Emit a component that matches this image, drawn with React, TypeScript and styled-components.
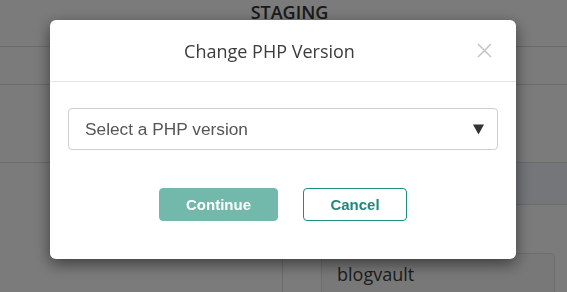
import styled, { createGlobalStyle } from 'styled-components';

const GlobalStyle = createGlobalStyle`
  html, body {
    margin: 0;
    padding: 0;
    background: #f6f6f6;
  }
  body {
    font-family: "Open Sans", "Liberation Sans", sans-serif;
    overflow: hidden;
  }
`;

/* page behind the dialog */

const Page = styled.div`
  width: 567px;
  height: 292px;
  background: #f6f6f6;
  overflow: hidden;
`;

const PanelTitle = styled.div`
  height: 46px;
  border-bottom: 1px solid #d6d6d6;
  padding-left: 12px;
  text-align: center;
  font-size: 18px;
  font-weight: 600;
  color: #333;
  text-transform: uppercase;
  line-height: normal;
`;

const Row = styled.div<{ $h: number; $noLine?: boolean }>`
  height: ${(p) => p.$h}px;
  display: grid;
  grid-template-columns: 283px 1fr;
  border-bottom: 1px solid ${(p) => (p.$noLine ? 'transparent' : '#d6d6d6')};
`;

const Cell = styled.div<{ $tint?: boolean; $line?: boolean }>`
  background: ${(p) => (p.$tint ? '#e9ecf3' : 'transparent')};
  border-bottom: ${(p) => (p.$line ? '1px solid #d6d6d6' : 'none')};
`;

const Bottom = styled.div`
  display: grid;
  grid-template-columns: 283px 1fr;
  height: 100px;
`;

const LeftCol = styled.div`
  border-right: 1px solid #d6d6d6;
`;

const RightCol = styled.div`
  padding: 47px 12px 0 38px;
`;

const NameInput = styled.div`
  height: 44px;
  border: 1px solid #dcdcdc;
  border-radius: 4px;
  background: #f0f0f0;
  padding: 8px 0 0 15px;
  font-size: 18px;
  color: #3a3a3a;
`;

/* dialog */

const Overlay = styled.div`
  position: fixed;
  inset: 0;
  background: rgba(0, 0, 0, 0.5);
  display: flex;
  justify-content: flex-start;
  align-items: flex-start;
  padding: 20px 0 0 50px;
`;

const Dialog = styled.div`
  width: 466px;
  height: 239px;
  background: #fff;
  border-radius: 6px;
  box-shadow: 0 5px 15px rgba(0, 0, 0, 0.5);
  display: flex;
  flex-direction: column;
`;

const Header = styled.div`
  height: 61px;
  border-bottom: 1px solid #e5e5e5;
  display: flex;
  align-items: center;
  padding: 0 24px 0 12px;
`;

const Title = styled.h4`
  flex: 1;
  margin: 0;
  text-align: center;
  font-family: "Open Sans", sans-serif;
  font-size: 18px;
  font-weight: 400;
  color: #3c3c3c;
`;

const CloseButton = styled.button`
  width: 15px;
  height: 15px;
  padding: 0;
  border: none;
  background: none;
  display: flex;
  cursor: pointer;
`;

const Body = styled.div`
  padding: 26px 18px 0;
`;

const Select = styled.div`
  height: 40px;
  border: 1px solid #cfcfcf;
  border-radius: 4px;
  display: flex;
  align-items: center;
  justify-content: space-between;
  padding: 0 13px 0 16px;
  font-family: "Liberation Sans", Arial, sans-serif;
  font-size: 17.3px;
  color: #555;
`;

const Actions = styled.div`
  display: flex;
  justify-content: center;
  gap: 25px;
  margin-top: 38px;
`;

const Button = styled.button<{ $primary?: boolean; $w: number }>`
  width: ${(p) => p.$w}px;
  height: 33px;
  border-radius: 4px;
  border: 1px solid ${(p) => (p.$primary ? '#72b9ac' : '#1b8e7e')};
  background: ${(p) => (p.$primary ? '#72b9ac' : '#fff')};
  color: ${(p) => (p.$primary ? '#fff' : '#1b8a7a')};
  font-family: "Liberation Sans", Arial, sans-serif;
  font-weight: 700;
  font-size: 15px;
  padding: 0;
  cursor: pointer;
`;

export default function App() {
  return (
    <>
      <GlobalStyle />
      <Page>
        <PanelTitle>Staging</PanelTitle>
        <Row $h={37} />
        <Row $h={77} />
        <Row $h={42} $noLine>
          <Cell />
          <Cell $tint $line />
        </Row>
        <Bottom>
          <LeftCol />
          <RightCol>
            <NameInput>blogvault</NameInput>
          </RightCol>
        </Bottom>
      </Page>
      <Overlay>
        <Dialog>
          <Header>
            <Title>Change PHP Version</Title>
            <CloseButton aria-label="Close">
              <svg width="15" height="15" viewBox="0 0 15 15">
                <path d="M1 1L14 14M14 1L1 14" stroke="#c6c6c6" strokeWidth="1.6" />
              </svg>
            </CloseButton>
          </Header>
          <Body>
            <Select>
              <span>Select a PHP version</span>
              <svg width="11" height="11" viewBox="0 0 11 11">
                <polygon points="0,0.5 11,0.5 5.5,10.5" fill="#333" />
              </svg>
            </Select>
            <Actions>
              <Button $primary $w={119}>Continue</Button>
              <Button $w={104}>Cancel</Button>
            </Actions>
          </Body>
        </Dialog>
      </Overlay>
    </>
  );
}
